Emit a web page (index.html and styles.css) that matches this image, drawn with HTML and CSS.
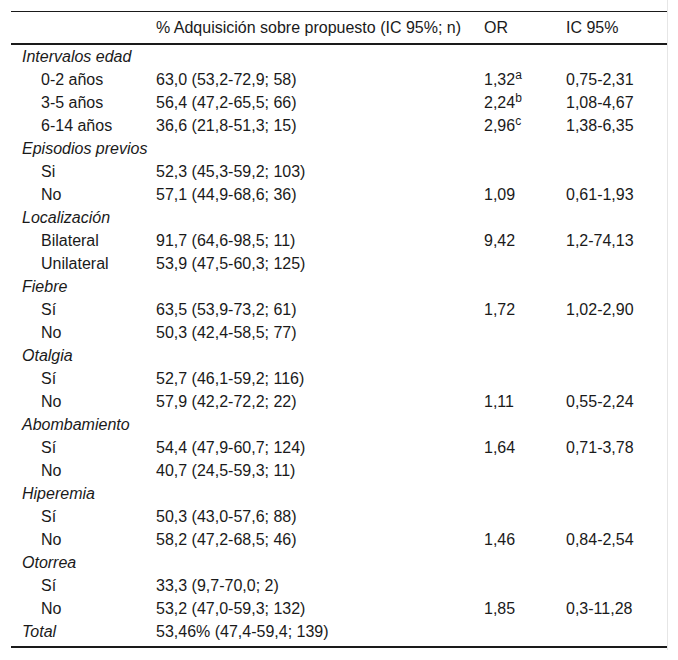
FILE: index.html
```html
<!DOCTYPE html>
<html lang="es">
<head>
<meta charset="utf-8">
<title>Tabla</title>
<link rel="stylesheet" href="styles.css">
</head>
<body>
<div class="wrap">
<table class="data">
<thead>
<tr><th class="c1"></th><th class="c2">% Adquisición sobre propuesto (IC 95%; n)</th><th class="c3">OR</th><th class="c4">IC 95%</th></tr>
</thead>
<tbody>
<tr><td class="grp">Intervalos edad</td><td></td><td></td><td></td></tr>
<tr><td class="sub">0-2 años</td><td>63,0 (53,2-72,9; 58)</td><td>1,32<sup>a</sup></td><td>0,75-2,31</td></tr>
<tr><td class="sub">3-5 años</td><td>56,4 (47,2-65,5; 66)</td><td>2,24<sup>b</sup></td><td>1,08-4,67</td></tr>
<tr><td class="sub">6-14 años</td><td>36,6 (21,8-51,3; 15)</td><td>2,96<sup>c</sup></td><td>1,38-6,35</td></tr>
<tr><td class="grp">Episodios previos</td><td></td><td></td><td></td></tr>
<tr><td class="sub">Si</td><td>52,3 (45,3-59,2; 103)</td><td></td><td></td></tr>
<tr><td class="sub">No</td><td>57,1 (44,9-68,6; 36)</td><td>1,09</td><td>0,61-1,93</td></tr>
<tr><td class="grp">Localización</td><td></td><td></td><td></td></tr>
<tr><td class="sub">Bilateral</td><td>91,7 (64,6-98,5; 11)</td><td>9,42</td><td>1,2-74,13</td></tr>
<tr><td class="sub">Unilateral</td><td>53,9 (47,5-60,3; 125)</td><td></td><td></td></tr>
<tr><td class="grp">Fiebre</td><td></td><td></td><td></td></tr>
<tr><td class="sub">Sí</td><td>63,5 (53,9-73,2; 61)</td><td>1,72</td><td>1,02-2,90</td></tr>
<tr><td class="sub">No</td><td>50,3 (42,4-58,5; 77)</td><td></td><td></td></tr>
<tr><td class="grp">Otalgia</td><td></td><td></td><td></td></tr>
<tr><td class="sub">Sí</td><td>52,7 (46,1-59,2; 116)</td><td></td><td></td></tr>
<tr><td class="sub">No</td><td>57,9 (42,2-72,2; 22)</td><td>1,11</td><td>0,55-2,24</td></tr>
<tr><td class="grp">Abombamiento</td><td></td><td></td><td></td></tr>
<tr><td class="sub">Sí</td><td>54,4 (47,9-60,7; 124)</td><td>1,64</td><td>0,71-3,78</td></tr>
<tr><td class="sub">No</td><td>40,7 (24,5-59,3; 11)</td><td></td><td></td></tr>
<tr><td class="grp">Hiperemia</td><td></td><td></td><td></td></tr>
<tr><td class="sub">Sí</td><td>50,3 (43,0-57,6; 88)</td><td></td><td></td></tr>
<tr><td class="sub">No</td><td>58,2 (47,2-68,5; 46)</td><td>1,46</td><td>0,84-2,54</td></tr>
<tr><td class="grp">Otorrea</td><td></td><td></td><td></td></tr>
<tr><td class="sub">Sí</td><td>33,3 (9,7-70,0; 2)</td><td></td><td></td></tr>
<tr><td class="sub">No</td><td>53,2 (47,0-59,3; 132)</td><td>1,85</td><td>0,3-11,28</td></tr>
<tr class="last"><td class="grp">Total</td><td>53,46% (47,4-59,4; 139)</td><td></td><td></td></tr>
</tbody>
</table>
</div>
</body>
</html>
```

FILE: styles.css
```css
html, body {
  margin: 0;
  padding: 0;
  background: #ffffff;
}
body {
  font-family: "Liberation Sans", Arial, sans-serif;
  font-size: 16px;
  color: #1a1a1a;
}
.wrap {
  width: 668px;
  border-right: 1px solid #e6e6e6;
  padding: 11px 0 2px 11px;
  box-sizing: border-box;
}
.data {
  width: 656px;
  border-collapse: separate;
  border-spacing: 0;
  table-layout: fixed;
}
.data th, .data td {
  padding: 0 0 0 6px;
  text-align: left;
  font-weight: normal;
  white-space: nowrap;
  vertical-align: middle;
}
.data th {
  height: 31px;
  border-top: 1px solid #1a1a1a;
  border-bottom: 2px solid #1a1a1a;
}
.data td {
  height: 23px;
  line-height: 23px;
}
.c1 { width: 133px; }
.c2 { width: 322px; }
.c3 { width: 76px; }
.c4 { width: 101px; }
.data td.grp {
  font-style: italic;
  padding-left: 11px;
}
.data td.sub {
  padding-left: 30px;
}
.data tr.last td {
  height: 26px;
  line-height: 23px;
  vertical-align: top;
  border-bottom: 2px solid #1a1a1a;
}
sup {
  font-size: 12px;
  line-height: 0;
  vertical-align: 6px;
}
```
